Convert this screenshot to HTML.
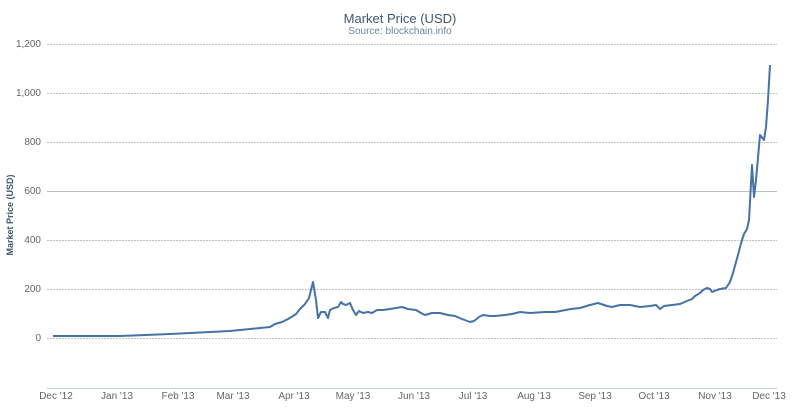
<!DOCTYPE html><html><head><style>body{margin:0;background:#fff}svg{display:block;font-family:"Liberation Sans","DejaVu Sans",sans-serif}</style></head><body>
<svg width="800" height="416" viewBox="0 0 800 416">
<text x="400" y="23" text-anchor="middle" font-size="13" fill="#3e576f">Market Price (USD)</text>
<text x="400" y="34" text-anchor="middle" font-size="10" fill="#6d869f">Source: blockchain.info</text>
<g stroke="#c0c0c0" stroke-width="1" stroke-dasharray="2,1">
<line x1="47" x2="777" y1="44.5" y2="44.5"/><line x1="47" x2="777" y1="93.5" y2="93.5"/><line x1="47" x2="777" y1="142.5" y2="142.5"/>
<line x1="47" x2="777" y1="240.5" y2="240.5"/><line x1="47" x2="777" y1="289.5" y2="289.5"/><line x1="47" x2="777" y1="338.5" y2="338.5"/>
</g>
<line x1="47" x2="777" y1="191.5" y2="191.5" stroke="#c0c0c0"/>
<line x1="47" x2="777" y1="388.5" y2="388.5" stroke="#c0d0e0"/>
<g font-size="10" fill="#666" text-anchor="end">
<text x="41" y="47">1,200</text><text x="41" y="96">1,000</text><text x="41" y="145">800</text><text x="41" y="194">600</text><text x="41" y="243">400</text><text x="41" y="292">200</text><text x="41" y="341">0</text>
</g>
<text transform="translate(13,215) rotate(-90)" text-anchor="middle" font-size="9" font-weight="bold" fill="#3e576f">Market Price (USD)</text>
<g font-size="10" fill="#666" text-anchor="middle">
<text x="56" y="399">Dec '12</text><text x="117" y="399">Jan '13</text><text x="178" y="399">Feb '13</text><text x="233" y="399">Mar '13</text><text x="294" y="399">Apr '13</text><text x="353" y="399">May '13</text><text x="414" y="399">Jun '13</text><text x="473" y="399">Jul '13</text><text x="534" y="399">Aug '13</text><text x="595" y="399">Sep '13</text><text x="654" y="399">Oct '13</text><text x="715" y="399">Nov '13</text><text x="769" y="399">Dec '13</text>
</g>
<polyline fill="none" stroke="#4572a7" stroke-width="2" stroke-linejoin="round" points="53,336 120,336 170,334 230,331 250,329 270,327 275,324 282,322 288,319 293,316 296,314 300,309 305,304 309,298 313,282 316,300 318,318 321,312 325,312 328,318 330,310 334,308 338,307 341,302 343,304 346,305 350,303 353,310 356,315 359,311 363,313 368,312 372,313 377,310 383,310 390,309 402,307 408,309 416,310 421,313 425,315 432,313 440,313 448,315 455,316 462,319 470,322 474,321 479,317 483,315 490,316 495,316 505,315 512,314 520,312 530,313 545,312 555,312 571,309 580,308 590,305 598,303 607,306 612,307 620,305 630,305 640,307 650,306 656,305 660,309 664,306 672,305 680,304 687,301 692,299 695,296 700,293 703,290 707,288 710,289 712,292 717,290 720,289 726,288 730,282 733,273 736,262 738,255 740,247 742,240 744,234 747,229 749,220 752,165 754,197 756,180 760,135 764,140 766,127 768,100 770,65"/>
</svg></body></html>
